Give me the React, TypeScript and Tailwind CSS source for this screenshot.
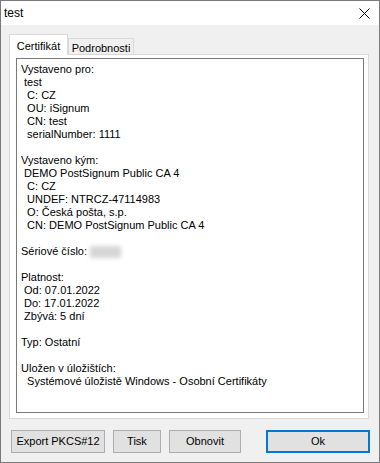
import React from 'react';

const lines = `Vystaveno pro:
 test
  C: CZ
  OU: iSignum
  CN: test
  serialNumber: 1111

Vystaveno kým:
 DEMO PostSignum Public CA 4
  C: CZ
  UNDEF: NTRCZ-47114983
  O: Česká pošta, s.p.
  CN: DEMO PostSignum Public CA 4
`;

const lines2 = `
Platnost:
 Od: 07.01.2022
 Do: 17.01.2022
 Zbývá: 5 dní

Typ: Ostatní

Uložen v úložištích:
  Systémové úložistě Windows - Osobní Certifikáty`;

const Btn: React.FC<{ label: string; w: string; primary?: boolean }> = ({ label, w, primary }) => (
  <button
    className={`${w} h-[23px] bg-[#e1e1e1] flex items-center justify-center ${
      primary ? 'border-2 border-[#0078d7]' : 'border border-[#adadad]'
    }`}
  >
    {label}
  </button>
);

export default function App() {
  return (
    <div className="w-[380px] h-[463px] border border-[#7a7a7a] flex flex-col bg-[#f0f0f0] font-['Liberation_Sans',Arial,sans-serif] text-[11px] text-black">
      <div className="h-[24px] shrink-0 bg-white flex items-center justify-between pl-[3px] pr-[9px] text-[12px]">
        <span>test</span>
        <svg width="11" height="11" viewBox="0 0 11 11">
          <path d="M0.5 0.5 L10.5 10.5 M10.5 0.5 L0.5 10.5" stroke="#000" strokeWidth="1" fill="none" />
        </svg>
      </div>

      <div className="flex-1 flex flex-col pl-[8px] pt-[9px]">
        <div className="flex items-end h-[20px]">
          <div className="relative z-10 -mb-px w-[59px] h-[21px] bg-white border border-b-0 border-[#d9d9d9] flex justify-center pt-[3px]">
            Certifikát
          </div>
          <div className="w-[66px] h-[16px] bg-[#f0f0f0] border border-b-0 border-[#d9d9d9] flex justify-center pt-[1px]">
            Podrobnosti
          </div>
        </div>

        <div className="w-[360px] h-[365px] border border-[#d9d9d9] bg-white pt-[3px] pl-[6px]">
          <div className="w-[348px] h-[355px] border border-[#7a7a7a] bg-white pl-[4px] pt-[4px] whitespace-pre leading-[13px]">
            {lines}
            {'\n'}
            <span>Sériové číslo: </span>
            <span className="inline-block w-[31px] h-[12px] bg-[#d6d6d6] blur-[2px] align-middle" />
            {'\n'}
            {lines2}
          </div>
        </div>

        <div className="flex mt-[11px] pl-[2px]">
          <Btn label="Export PKCS#12" w="w-[94px]" />
          <div className="ml-[8px]">
            <Btn label="Tisk" w="w-[48px]" />
          </div>
          <div className="ml-[8px]">
            <Btn label="Obnovit" w="w-[72px]" />
          </div>
          <div className="ml-[25px]">
            <Btn label="Ok" w="w-[104px]" primary />
          </div>
        </div>
      </div>
    </div>
  );
}
